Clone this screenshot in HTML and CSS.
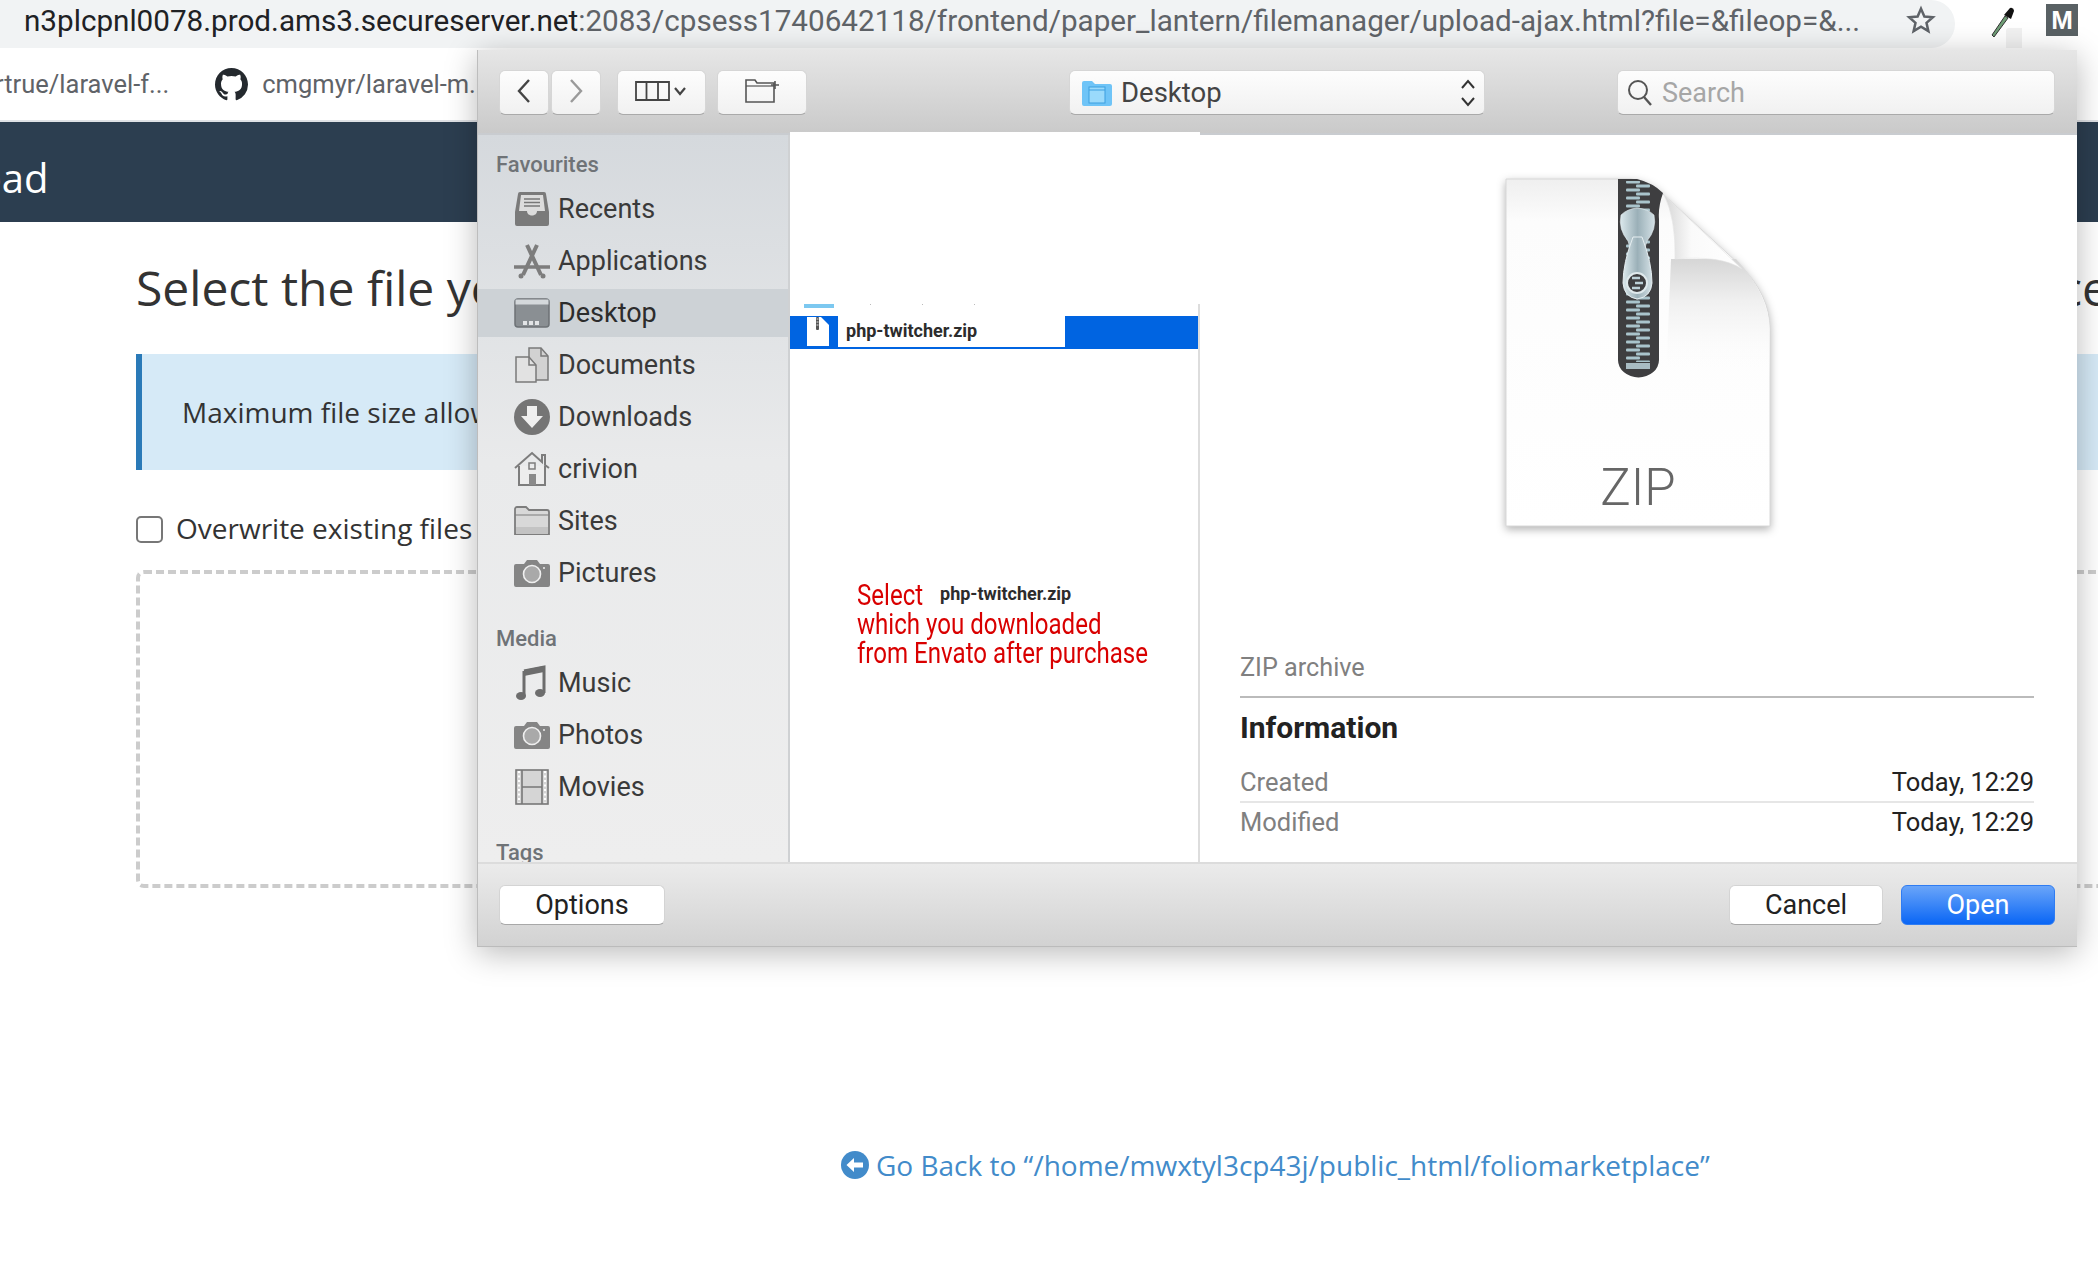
FILE: index.html
```html
<!DOCTYPE html>
<html lang="en">
<head>
    <meta charset="UTF-8">
    <meta name="viewport" content="width=device-width, initial-scale=1.0">
    <title>Upload</title>
    <link rel="stylesheet" href="styles.css">
</head>
<body>

<svg class="defs" width="0" height="0">
    <symbol id="camera" viewBox="0 0 36 28">
        <path d="M2 5h8l3-4h10l3 4h8a2 2 0 0 1 2 2v19a2 2 0 0 1-2 2H2a2 2 0 0 1-2-2V7a2 2 0 0 1 2-2z" fill="#858585"/>
        <circle cx="18" cy="15" r="8.5" fill="#a9a9a9" stroke="#efefef" stroke-width="1.6"/>
        <circle cx="30" cy="9" r="1" fill="#eee"/>
    </symbol>
</svg>

<div class="url-row">
    <div class="url-bar">
        <span class="url-text"><span class="url-host">n3plcpnl0078.prod.ams3.secureserver.net</span>:2083/cpsess1740642118/frontend/paper_lantern/filemanager/upload-ajax.html?file=&amp;fileop=&amp;...</span>
        <svg class="star" width="30" height="30" viewBox="0 0 24 24"><path d="M12 3l2.7 6.2 6.8.6-5.1 4.5 1.5 6.6L12 17.4l-5.9 3.5 1.5-6.6-5.1-4.5 6.8-.6z" fill="none" stroke="#5f6368" stroke-width="2"/></svg>
    </div>
    <div class="ext-icons">
        <svg width="34" height="44" viewBox="0 0 34 44">
            <rect x="18" y="24" width="22" height="24" rx="3" fill="#f1f1f1"/>
            <path d="M4 31l13-19 3 2L6 33z" fill="#6f9e76" stroke="#333" stroke-width="1"/>
            <path d="M16 11l6-7a3 3 0 0 1 4 3l-3 8z" fill="#111"/>
        </svg>
        <div class="ext-m">M</div>
    </div>
</div>

<div class="bookmarks">
    <span class="bookmark-clip">rtrue/laravel-f...</span>
    <svg class="octocat" width="33" height="33" viewBox="0 0 16 16"><path fill="#24292e" d="M8 0C3.58 0 0 3.58 0 8c0 3.54 2.29 6.53 5.47 7.59.4.07.55-.17.55-.38 0-.19-.01-.82-.01-1.49-2.01.37-2.53-.49-2.69-.94-.09-.23-.48-.94-.82-1.13-.28-.15-.68-.52-.01-.53.63-.01 1.08.58 1.23.82.72 1.21 1.87.87 2.33.66.07-.52.28-.87.51-1.07-1.78-.2-3.64-.89-3.64-3.95 0-.87.31-1.59.82-2.15-.08-.2-.36-1.02.08-2.12 0 0 .67-.21 2.2.82.64-.18 1.32-.27 2-.27.68 0 1.36.09 2 .27 1.53-1.04 2.2-.82 2.2-.82.44 1.1.16 1.92.08 2.12.51.56.82 1.27.82 2.15 0 3.07-1.87 3.75-3.65 3.95.29.25.54.73.54 1.48 0 1.07-.01 1.93-.01 2.2 0 .21.15.46.55.38A8.013 8.013 0 0016 8c0-4.42-3.58-8-8-8z"/></svg>
    <span>cmgmyr/laravel-m...</span>
</div>

<header class="page-header"><span>Upload</span></header>

<main class="page">
    <h1>Select the file you want to upload to “/home/mwxtyl3cp43j/public_html/foliomarketplace”.</h1>
    <div class="note-box">Maximum file size allowed for upload: 512 MB</div>
    <label class="overwrite"><span class="checkbox"></span>Overwrite existing files</label>
    <div class="dropzone"></div>
    <a class="go-back">
        <svg width="28" height="28" viewBox="0 0 28 28"><circle cx="14" cy="14" r="14" fill="#428bca"/><path d="M5.500 14L13 7v4.500h9v5h-9V21z" fill="#fff"/></svg>
        Go Back to “/home/mwxtyl3cp43j/public_html/foliomarketplace”
    </a>
</main>

<div class="dialog">
    <div class="dlg-toolbar">
        <div class="btn-group">
            <button class="tool-btn nav-btn"><svg width="18" height="28" viewBox="0 0 18 28"><path d="M14 3L4 14l10 11" fill="none" stroke="#444" stroke-width="2.400"/></svg></button>
            <button class="tool-btn nav-btn"><svg width="18" height="28" viewBox="0 0 18 28"><path d="M4 3l10 11L4 25" fill="none" stroke="#9a9a9a" stroke-width="2.400"/></svg></button>
        </div>
        <button class="tool-btn view-btn">
            <svg width="54" height="24" viewBox="0 0 54 24"><path d="M1 3h33v18H1zM11.500 3v18M23 3v18" fill="none" stroke="#444" stroke-width="1.800"/><path d="M40 9l5 6 5-6" fill="none" stroke="#444" stroke-width="2.200"/></svg>
        </button>
        <button class="tool-btn folder-btn">
            <svg width="36" height="26" viewBox="0 0 36 26"><path d="M2 24V2h9l2 3h17v19z" fill="none" stroke="#555" stroke-width="1.600"/><path d="M2 8h28" stroke="#555" stroke-width="1.200"/><path d="M31 3v8M27 7h8" stroke="#555" stroke-width="1.600"/></svg>
        </button>
        <div class="path-popup">
            <svg width="30" height="26" viewBox="0 0 30 26"><path d="M0 3a2 2 0 0 1 2-2h8l3 3h15a2 2 0 0 1 2 2v18a2 2 0 0 1-2 2H2a2 2 0 0 1-2-2z" fill="#6fc4f7"/><rect x="7" y="7" width="16" height="16" fill="#9adafb" stroke="#3d9fe0"/><path d="M7 10h16" stroke="#3d9fe0"/></svg>
            <span class="path-name">Desktop</span>
            <svg class="path-arrows" width="16" height="32" viewBox="0 0 16 32"><path d="M2 11l6-7 6 7M2 21l6 7 6-7" fill="none" stroke="#333" stroke-width="2"/></svg>
        </div>
        <div class="search-box">
            <svg width="26" height="28" viewBox="0 0 26 28"><circle cx="11" cy="11" r="9" fill="none" stroke="#555" stroke-width="2"/><path d="M17 18l7 8" stroke="#555" stroke-width="2.400"/></svg>
            Search
        </div>
    </div>

    <div class="dlg-body">
        <nav class="sidebar">
            <div class="side-title">Favourites</div>
            <div class="side-item">
                <svg class="side-icon" viewBox="0 0 36 36"><path d="M6 1h24a2 2 0 0 1 2 2l3 18v12a2 2 0 0 1-2 2H3a2 2 0 0 1-2-2V21L4 3a2 2 0 0 1 2-2z" fill="#7a7a7a"/><path d="M7 4h22l2 16h-8c0 6-10 6-10 0H5z" fill="#dcdcdc"/><path d="M10 8h16M10 11.500h16M10 15h16" stroke="#777" stroke-width="1.500"/></svg>
                Recents
            </div>
            <div class="side-item">
                <svg class="side-icon" viewBox="0 0 36 36"><path d="M13 2l14 30M23 2L9 32" stroke="#7d7d7d" stroke-width="4" fill="none"/><path d="M0 24h36" stroke="#7d7d7d" stroke-width="3.500"/><circle cx="7" cy="33" r="2.500" fill="#7d7d7d"/><circle cx="29" cy="33" r="2.500" fill="#7d7d7d"/></svg>
                Applications
            </div>
            <div class="side-item active">
                <svg class="side-icon" viewBox="0 0 36 30"><rect x="1" y="1" width="34" height="28" rx="3" fill="#8a8f93" stroke="#6d7276" stroke-width="1.500"/><rect x="1.500" y="1.500" width="33" height="5" fill="#d4d8db"/><path d="M9 23h4v4H9zM15 23h4v4h-4zM21 23h4v4h-4z" fill="#e2e4e6"/></svg>
                Desktop
            </div>
            <div class="side-item">
                <svg class="side-icon" viewBox="0 0 36 36"><path d="M15 1h12l7 8v24H15z" fill="#d2d2d2" stroke="#7a7a7a" stroke-width="1.500"/><path d="M2 10h13l7 8v17H2z" fill="#e2e2e2" stroke="#7a7a7a" stroke-width="1.500"/><path d="M27 1v8h7M15 10v8h7" fill="none" stroke="#7a7a7a" stroke-width="1.500"/></svg>
                Documents
            </div>
            <div class="side-item">
                <svg class="side-icon" viewBox="0 0 36 36"><circle cx="18" cy="18" r="18" fill="#757575"/><path d="M13 7h10v10h6L18 29 7 17h6z" fill="#efefef"/></svg>
                Downloads
            </div>
            <div class="side-item">
                <svg class="side-icon" viewBox="0 0 36 36"><path d="M1 17L18 2l10 9V4h3v10l4 3" fill="none" stroke="#7d7d7d" stroke-width="2"/><path d="M5 15v19h26V15" fill="#ededed" stroke="#7d7d7d" stroke-width="2"/><rect x="15" y="12" width="6" height="6" fill="none" stroke="#7d7d7d" stroke-width="1.500"/><rect x="15" y="23" width="7" height="11" fill="#8a8a8a"/></svg>
                crivion
            </div>
            <div class="side-item">
                <svg class="side-icon" viewBox="0 0 36 30"><path d="M1 3a2 2 0 0 1 2-2h9l3 3h18a2 2 0 0 1 2 2v22H1z" fill="#d8d8d8" stroke="#7d7d7d" stroke-width="1.800"/><path d="M1 9h34" stroke="#7d7d7d" stroke-width="1.200"/><rect x="2" y="21" width="32" height="7" fill="#c3c3c3"/></svg>
                Sites
            </div>
            <div class="side-item">
                <svg class="side-icon"><use href="#camera"/></svg>
                Pictures
            </div>
            <div class="side-title">Media</div>
            <div class="side-item">
                <svg class="side-icon" viewBox="0 0 36 36"><path d="M10 6L30 2v26" fill="none" stroke="#6d6d6d" stroke-width="3"/><path d="M10 6v25" stroke="#6d6d6d" stroke-width="3"/><path d="M10 5L30 1v6L10 11z" fill="#6d6d6d"/><ellipse cx="7" cy="31" rx="5" ry="4" fill="#6d6d6d"/><ellipse cx="26" cy="28" rx="5" ry="4" fill="#6d6d6d"/></svg>
                Music
            </div>
            <div class="side-item">
                <svg class="side-icon"><use href="#camera"/></svg>
                Photos
            </div>
            <div class="side-item">
                <svg class="side-icon" viewBox="0 0 36 36"><rect x="2" y="1" width="32" height="34" fill="#d5d5d5" stroke="#777" stroke-width="1.600"/><path d="M8 1v34M28 1v34M8 18h20" stroke="#777" stroke-width="1.600"/><path d="M5 2v32M31 2v32" stroke="#fff" stroke-width="2" stroke-dasharray="2 2.500"/></svg>
                Movies
            </div>
            <div class="side-title">Tags</div>
        </nav>

        <section class="files">
            <div class="file-list">
                <div class="file-ticks"><span></span></div>
                <div class="file-row">
                    <div class="file-row-icon">
                        <svg width="22" height="29" viewBox="0 0 22 29"><path d="M0 0h14l8 8v21H0z" fill="#fff"/><rect x="9" y="0" width="3" height="13" rx="1" fill="#555"/><path d="M9.500 2h2M9.500 5h2M9.500 8h2" stroke="#ddd"/></svg>
                    </div>
                    <div class="file-name">php-twitcher.zip</div>
                </div>
                <div class="howto">
                    <div class="howto-line"><span class="red">Select</span><span class="file-name-inline">php-twitcher.zip</span></div>
                    <div class="howto-line"><span class="red">which you downloaded</span></div>
                    <div class="howto-line"><span class="red">from Envato after purchase</span></div>
                </div>
            </div>
        </section>

        <section class="preview">
            <svg class="zip-icon" width="264" height="347" viewBox="0 0 264 347">
                <defs>
                    <linearGradient id="pageTop" x1="0" y1="0" x2="0" y2="1">
                        <stop offset="0" stop-color="#efefef"/>
                        <stop offset=".12" stop-color="#fcfcfc"/>
                        <stop offset="1" stop-color="#fff"/>
                    </linearGradient>
                    <linearGradient id="curlShade" x1="0" y1="0" x2="0" y2="1">
                        <stop offset="0" stop-color="#d6d6d6"/>
                        <stop offset=".35" stop-color="#f0f0f0"/>
                        <stop offset="1" stop-color="#fff" stop-opacity="0"/>
                    </linearGradient>
                    <linearGradient id="flap" x1="0" y1="0" x2="1" y2="0">
                        <stop offset="0" stop-color="#d6d6d6"/>
                        <stop offset=".35" stop-color="#fafafa"/>
                        <stop offset="1" stop-color="#fff"/>
                    </linearGradient>
                    <linearGradient id="metal" x1="0" y1="0" x2="1" y2="0">
                        <stop offset="0" stop-color="#dbe8ec"/>
                        <stop offset=".5" stop-color="#9bb0b8"/>
                        <stop offset="1" stop-color="#d3e0e5"/>
                    </linearGradient>
                    <pattern id="teeth" width="24" height="8" patternUnits="userSpaceOnUse" patternTransform="translate(120 1)">
                        <rect x="0" y=".4" width="14" height="3.200" rx="1" fill="#a9c4cc"/>
                        <rect x="10" y="4.400" width="14" height="3.200" rx="1" fill="#a9c4cc"/>
                    </pattern>
                </defs>
                <path d="M0 0H125Q146 2 158 16L234 86Q264 116 264 150V347H0Z" fill="url(#pageTop)" stroke="#d8d8d8"/>
                <path d="M165 80H230Q262 114 264 150V200H160Z" fill="url(#curlShade)"/>
                <path d="M112 0H131Q147 4 157 14Q152 28 153 40V181A20 17 0 0 1 112 181Z" fill="#3e3e40"/>
                <rect x="120" y="2" width="24" height="181" fill="url(#teeth)"/>
                <rect x="120" y="184" width="24" height="6" fill="#a9bcc3"/>
                <path d="M131 29Q121 30 115 36Q112 50 122 62L125 72H138L141 62Q151 50 148 36Q142 30 131 29Z" fill="url(#metal)" stroke="#e6eef1" stroke-width=".6"/>
                <path d="M127 58H136Q146 84 146 104Q145 118 131 120Q118 118 117 104Q117 84 127 58Z" fill="url(#metal)" stroke="#e6eef1"/>
                <circle cx="131" cy="104" r="10" fill="#3e3e40" stroke="#dfe9ec" stroke-width="2"/>
                <path d="M126 99h8M129 104h8M126 109h8" stroke="#bcd0d7" stroke-width="2.500"/>
                <path d="M158 16Q170 40 169 80Q215 76 236 90Z" fill="url(#flap)" stroke="#e4e4e4" stroke-width=".6"/>
                <text class="zip-label" x="132" y="326" text-anchor="middle">ZIP</text>
            </svg>
            <div class="kind">ZIP archive</div>
            <div class="info-title">Information</div>
            <div class="meta-row"><span class="meta-key">Created</span><span>Today, 12:29</span></div>
            <div class="meta-row"><span class="meta-key">Modified</span><span>Today, 12:29</span></div>
        </section>
    </div>

    <div class="dlg-footer">
        <button class="foot-btn options-btn">Options</button>
        <button class="foot-btn cancel-btn">Cancel</button>
        <button class="foot-btn open-btn">Open</button>
    </div>
</div>

</body>
</html>
```

FILE: styles.css
```css
html, body {
    margin: 0;
    height: 100%;
}
body {
    width: 2098px;
    height: 1272px;
    overflow: hidden;
    position: relative;
    background-color: white;
    font-family: "Open Sans", sans-serif;
}
.defs {
    position: absolute;
}
button {
    font-family: inherit;
    padding: 0;
    cursor: pointer;
}

/* browser chrome */
.url-row {
    display: flex;
    height: 48px;
}
.url-bar {
    width: 1955px;
    box-sizing: border-box;
    padding-left: 24px;
    line-height: 42px;
    white-space: nowrap;
    background-color: #f1f3f4;
    border-radius: 0 26px 26px 0;
    font-family: Roboto, sans-serif;
    font-size: 29.65px;
    color: #5f6368;
    overflow: hidden;
    position: relative;
}
.url-host {
    color: #202124;
}
.star {
    position: absolute;
    left: 1906px;
    top: 5px;
}
.ext-icons {
    flex: 1;
    display: flex;
    align-items: flex-start;
    padding: 4px 0 0 33px;
    gap: 24px;
}
.ext-m {
    width: 32px;
    height: 32px;
    background-color: #596164;
    color: white;
    font: bold 26px/32px "Liberation Sans", sans-serif;
    text-align: center;
}
.bookmarks {
    height: 72px;
    display: flex;
    align-items: center;
    font-family: Roboto, sans-serif;
    font-size: 25.5px;
    color: #5f6368;
    border-bottom: 2px solid #dfe1e5;
    white-space: nowrap;
}
.bookmark-clip {
    margin-left: -5px;
}
.octocat {
    margin: 0 14px 0 46px;
}

/* page behind the dialog */
.page-header {
    height: 100px;
    background-color: #2c3e50;
    color: white;
    font-size: 40px;
    line-height: 112px;
    overflow: hidden;
}
.page-header span {
    margin-left: -86px;
}
.page {
    padding-left: 136px;
    width: 2100px;
    box-sizing: border-box;
}
h1 {
    margin: 33px 0;
    font-size: 48px;
    font-weight: 400;
    line-height: 66px;
    color: #333;
    white-space: nowrap;
}
.note-box {
    height: 116px;
    box-sizing: border-box;
    width: 2000px;
    background-color: #d6eaf7;
    border-left: 6px solid #2a7ab8;
    padding-left: 40px;
    font-size: 28px;
    line-height: 116px;
    color: #333;
}
.overwrite {
    margin-top: 41px;
    display: flex;
    align-items: center;
    height: 34px;
    font-size: 28px;
    color: #333;
}
.checkbox {
    width: 23px;
    height: 23px;
    border: 2px solid #777;
    border-radius: 5px;
    margin: 3px 13px 0 0;
}
.dropzone {
    margin-top: 25px;
    height: 318px;
    width: 2000px;
    box-sizing: border-box;
    border: 4px dashed #ccc;
    border-radius: 8px;
}
.go-back {
    margin: 257px 0 0 705px;
    display: flex;
    align-items: center;
    gap: 7px;
    height: 40px;
    font-size: 28px;
    color: #428bca;
    white-space: nowrap;
}

/* file dialog */
.dialog {
    position: absolute;
    left: 477px;
    top: 50px;
    width: 1600px;
    height: 897px;
    display: flex;
    flex-direction: column;
    font-family: Roboto, sans-serif;
    box-shadow: 0 6px 30px rgba(0, 0, 0, 0.28);
    border-left: 1px solid #bdbdbd;
    box-sizing: border-box;
}
.dlg-toolbar {
    height: 85px;
    box-sizing: border-box;
    flex: none;
    display: flex;
    padding: 20px 22px 0 21px;
    background: linear-gradient(#e6e6e6, #cacaca);
    border-bottom: 2px solid #c9ccd0;
}
.tool-btn, .path-popup, .search-box {
    height: 45px;
    box-sizing: border-box;
    background: linear-gradient(#fdfdfd, #f1f1f1);
    border: 1px solid #d6d6d6;
    border-bottom-color: #aaa;
    border-radius: 6px;
}
.btn-group {
    display: flex;
    gap: 2px;
}
.nav-btn {
    width: 50px;
}
.view-btn {
    width: 89px;
    margin-left: 16px;
}
.folder-btn {
    width: 90px;
    margin-left: 11px;
}
.path-popup {
    width: 416px;
    margin-left: 262px;
    display: flex;
    align-items: center;
    padding: 0 8px 0 12px;
    font-size: 27.5px;
    color: #444;
}
.path-name {
    margin-left: 9px;
    flex: 1;
}
.search-box {
    width: 438px;
    margin-left: 132px;
    display: flex;
    align-items: center;
    gap: 9px;
    padding-left: 9px;
    font-size: 27px;
    color: #a6a6a6;
}
.dlg-body {
    flex: 1;
    display: flex;
    min-height: 0;
}
.sidebar {
    width: 312px;
    flex: none;
    box-sizing: border-box;
    padding: 15px 0 0;
    overflow: hidden;
    background: linear-gradient(#d5d9dd, #e9eaeb 45%, #eeeeee);
    border-right: 2px solid #cfd1d3;
}
.side-title {
    height: 30px;
    line-height: 30px;
    padding-left: 18px;
    margin: 27px 0 5px;
    font-size: 22px;
    font-weight: 500;
    color: #6f7377;
}
.side-title:first-child {
    margin-top: 0;
}
.side-item {
    height: 48px;
    margin: 4px 0;
    display: flex;
    align-items: center;
    padding-left: 36px;
    gap: 8px;
    font-size: 27px;
    color: #3a3a3a;
}
.side-item.active {
    background-color: #cdd2d6;
    color: #2c2c2c;
}
.side-icon {
    width: 36px;
    height: 36px;
    flex: none;
}
.files {
    width: 410px;
    flex: none;
    margin-top: -3px;
    position: relative;
    background-color: white;
    display: flex;
    flex-direction: column;
}
.file-list {
    flex: 1;
    margin-top: 172px;
    border-right: 2px solid #ddd;
}
.file-ticks {
    height: 12px;
    padding-left: 14px;
    display: flex;
    background: repeating-linear-gradient(90deg, transparent 0 30px, #bbb 30px 31px, transparent 31px 52px) 50px 0 / 180px 1px no-repeat;
}
.file-ticks span {
    width: 30px;
    height: 4px;
    background-color: #7cc8f0;
}
.file-row {
    height: 33px;
    display: flex;
    background-color: #0064e1;
}
.file-row-icon {
    width: 48px;
    flex: none;
    box-sizing: border-box;
    padding: 1px 0 0 17px;
}
.file-name {
    width: 227px;
    height: 31px;
    box-sizing: border-box;
    padding-left: 8px;
    background-color: white;
    font-size: 18px;
    font-weight: 700;
    line-height: 29px;
    color: #2c2c2c;
}
.howto {
    padding: 231px 0 0 67px;
}
.howto-line {
    height: 29px;
    display: flex;
    align-items: center;
    white-space: nowrap;
}
.red {
    display: inline-block;
    font-size: 29px;
    color: #d90000;
    transform: scaleX(0.83);
    transform-origin: left center;
    width: 83px;
}
.file-name-inline {
    font-size: 18px;
    font-weight: 700;
    color: #2c2c2c;
    margin-top: -3px;
}
.preview {
    flex: 1;
    box-sizing: border-box;
    padding: 44px 43px 0 40px;
    background-color: white;
    display: flex;
    flex-direction: column;
}
.zip-icon {
    flex: none;
    align-self: center;
    overflow: visible;
    margin-right: -2px;
    filter: drop-shadow(0 3px 4px rgba(0, 0, 0, 0.3));
}
.zip-label {
    font-family: Roboto, sans-serif;
    font-size: 51px;
    font-weight: 300;
    fill: #666;
}
.kind {
    margin-top: 124px;
    height: 48px;
    box-sizing: border-box;
    line-height: 36px;
    font-size: 25.2px;
    color: #808080;
    border-bottom: 2px solid #bbb;
}
.info-title {
    margin-top: 12px;
    margin-bottom: 17px;
    line-height: 36px;
    font-size: 30px;
    font-weight: 700;
    color: #222;
}
.meta-row {
    display: flex;
    justify-content: space-between;
    height: 40px;
    line-height: 38px;
    font-size: 25.5px;
    color: #222;
    box-sizing: border-box;
}
.meta-row:nth-of-type(odd) {
    border-bottom: 2px solid #e6e6e6;
}
.meta-key {
    color: #808080;
}
.dlg-footer {
    height: 85px;
    flex: none;
    box-sizing: border-box;
    display: flex;
    align-items: center;
    padding: 0 22px 0 21px;
    background: linear-gradient(#ebebeb, #d2d2d2);
    border-top: 2px solid #dcdcdc;
    border-bottom: 1px solid #bbb;
}
.foot-btn {
    height: 40px;
    box-sizing: border-box;
    border: 1px solid #d4d4d4;
    border-bottom-color: #a8a8a8;
    border-radius: 6px;
    background-color: white;
    font-family: Roboto, sans-serif;
    font-size: 27px;
    color: #222;
}
.options-btn {
    width: 166px;
}
.cancel-btn {
    width: 154px;
    margin-left: auto;
}
.open-btn {
    width: 154px;
    margin-left: 18px;
    background: linear-gradient(#6aa5f9, #0a66f5);
    border-color: #2f7cf2;
    color: white;
}
```
